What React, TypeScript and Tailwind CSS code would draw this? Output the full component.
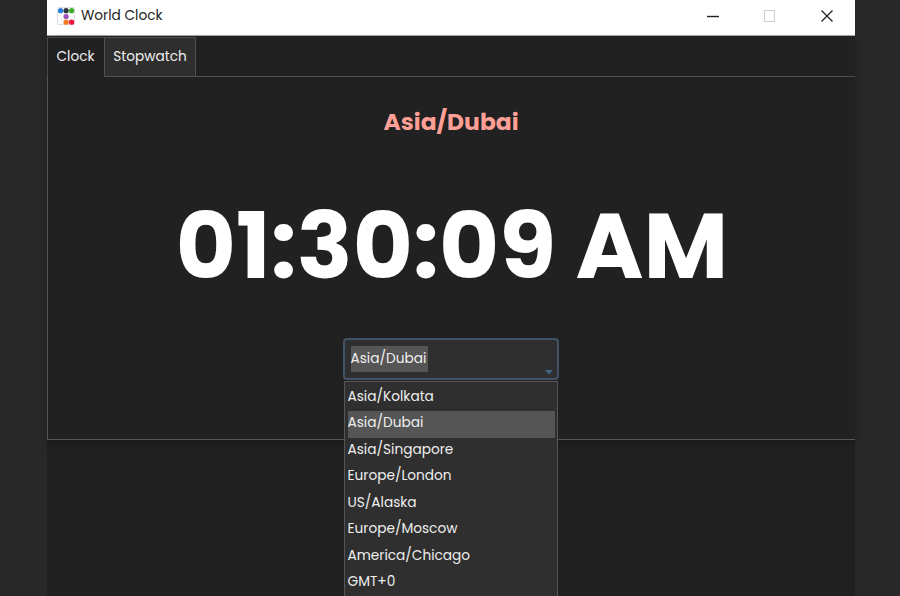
const zones = [
  "Asia/Kolkata",
  "Asia/Dubai",
  "Asia/Singapore",
  "Europe/London",
  "US/Alaska",
  "Europe/Moscow",
  "America/Chicago",
  "GMT+0",
];

const selected = "Asia/Dubai";

function AppIcon() {
  return (
    <svg className="h-[18px] w-[18px]" viewBox="0 0 18 18">
      <rect x="0.5" y="0.5" width="17" height="17" rx="1" fill="#fcfcfc" stroke="#dedede" />
      <circle cx="3.6" cy="3.7" r="2.6" fill="#2b7de0" />
      <circle cx="9.1" cy="3.7" r="2.6" fill="#2c3a40" />
      <circle cx="14.6" cy="3.7" r="2.6" fill="#3fae29" />
      <circle cx="9.1" cy="9.5" r="2.6" fill="#9b51b8" />
      <circle cx="9.1" cy="15.2" r="2.6" fill="#f47b20" />
      <circle cx="14.6" cy="15.2" r="2.6" fill="#f0143c" />
    </svg>
  );
}

function WindowControls() {
  return (
    <svg className="ml-auto mr-5 h-4 w-[130px]" viewBox="0 0 130 16" fill="none">
      <path d="M2 8.5h12" stroke="#222222" strokeWidth="1.4" />
      <rect x="59.5" y="2.500" width="10" height="11" stroke="#cccccc" />
      <path d="M116.500 2.500l11 11M127.500 2.500l-11 11" stroke="#222222" strokeWidth="1.3" />
    </svg>
  );
}

export default function App() {
  return (
    <div className="flex h-[596px] w-[900px] overflow-hidden bg-[#282828] pl-[47px] font-['Poppins','Inter',sans-serif] text-[13.7px] text-[#eeeeee]">
      <div className="flex w-[808px] flex-col bg-[#202020]">
        <header className="flex h-9 shrink-0 items-center border-b border-[#aaaaaa] bg-white pb-[3px] pl-2.5 text-[#222222]">
          <AppIcon />
          <span className="ml-1.5">World Clock</span>
          <WindowControls />
        </header>
        <main className="flex h-[404px] shrink-0 flex-col bg-[#212121] pt-px shadow-[0_3px_7px_rgba(0,0,0,0.22)]">
          <nav className="flex h-10 shrink-0">
            <button className="w-[57px] border-l border-t border-[#484848] pr-px">Clock</button>
            <button className="w-[92px] border border-[#505050] bg-[#2e2e2e]">Stopwatch</button>
            <div className="grow border-b border-[#505050]" />
          </nav>
          <section className="flex grow flex-col items-center border-b border-l border-[#555555] pr-0.5 pt-[27px]">
            <h1 className="pl-px text-[23.4px] font-bold leading-9 text-[#ff9f95]">{selected}</h1>
            <p className="mt-[58px] h-[96px] pl-[3px] text-[92.3px] font-bold leading-[96px] text-white">01:30:09 AM</p>
            <div className="relative mt-[44px] h-[42px] w-[216px] rounded-sm border-2 border-[#435366] bg-[#2f2f2f] p-1.5">
              <div className="h-[26px] w-[77px] bg-[#555555] leading-[25px]">{selected}</div>
              <svg className="absolute bottom-[3px] right-1 h-[5px] w-2" viewBox="0 0 8 5">
                <path d="M0 0h8L4 4.500z" fill="#466686" />
              </svg>
              <ul className="absolute -left-px top-[41px] z-10 h-[230px] w-[214px] border border-[#555555] bg-[#2f2f2f] pl-[3px] pr-0.5 pt-[2.500px]">
                {zones.map((zone) => (
                  <li
                    key={zone}
                    className={
                      zone === selected
                        ? "h-[26.55px] bg-[#555555] leading-[24.6px]"
                        : "h-[26.55px] leading-[24.6px]"
                    }
                  >
                    {zone}
                  </li>
                ))}
              </ul>
            </div>
          </section>
        </main>
      </div>
    </div>
  );
}
